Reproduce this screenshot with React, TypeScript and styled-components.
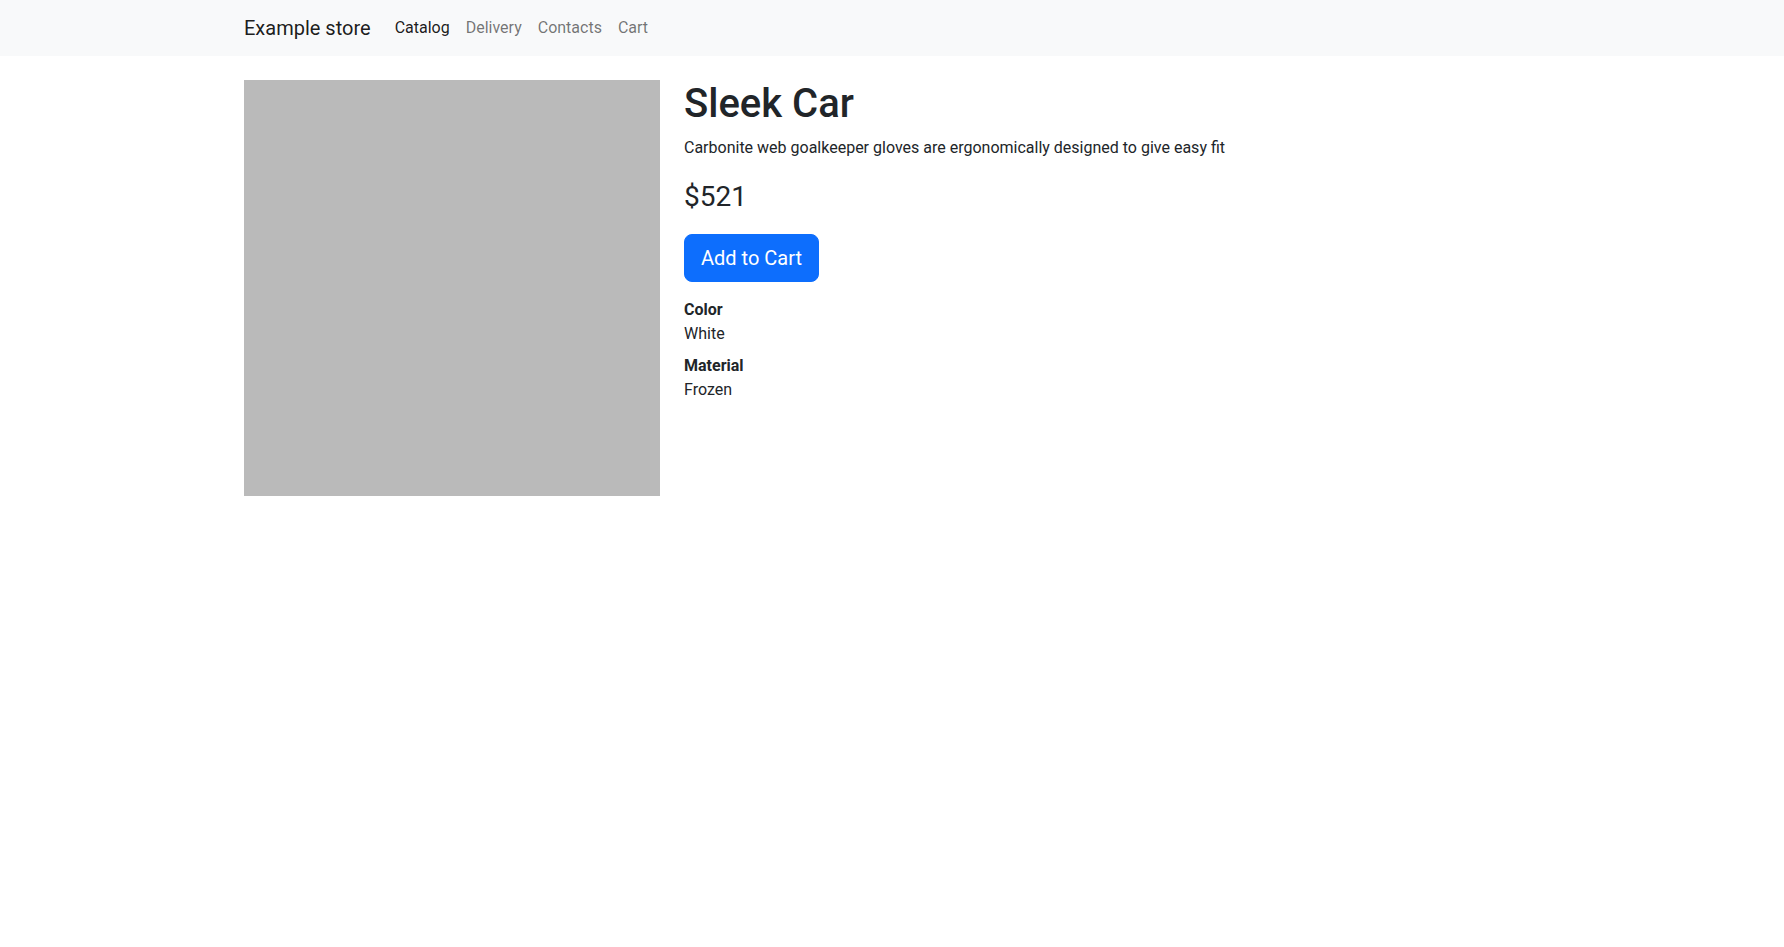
import React from "react";
import styled, { createGlobalStyle } from "styled-components";

const Global = createGlobalStyle`
  *, *::before, *::after { box-sizing: border-box; }
  body {
    margin: 0;
    font-family: Roboto, "Liberation Sans", sans-serif;
    font-size: 16px;
    line-height: 1.5;
    color: #212529;
    background: #fff;
  }
`;

const Navbar = styled.nav`
  background: #f8f9fa;
  padding: 8px 0;
`;

const Container = styled.div`
  max-width: 1320px;
  margin: 0 auto;
  padding: 0 12px;
`;

const NavInner = styled(Container)`
  display: flex;
  align-items: center;
`;

const Brand = styled.a`
  font-size: 20px;
  line-height: 30px;
  padding: 5px 0;
  margin-right: 16px;
  color: rgba(0, 0, 0, 0.9);
  text-decoration: none;
`;

const NavList = styled.div`
  display: flex;
`;

const NavLink = styled.a<{ $active?: boolean }>`
  padding: 8px;
  line-height: 24px;
  color: ${(p) => (p.$active ? "rgba(0,0,0,0.9)" : "rgba(0,0,0,0.55)")};
  text-decoration: none;
`;

const Row = styled.div`
  display: grid;
  grid-template-columns: 416px 1fr;
  column-gap: 24px;
  margin-top: 24px;
`;

const Picture = styled.div`
  width: 416px;
  height: 416px;
  background: #bababa;
`;

const Info = styled.div``;

const Title = styled.h1`
  font-size: 40px;
  font-weight: 500;
  line-height: 1.2;
  margin: 0 0 8px;
`;

const Text = styled.p`
  margin: 0 0 16px;
`;

const Price = styled.p`
  font-size: 28px;
  margin: 0 0 16px;
`;

const Button = styled.button`
  font-family: inherit;
  font-size: 20px;
  line-height: 30px;
  padding: 8px 16px;
  border: 1px solid #0d6efd;
  border-radius: 8px;
  background: #0d6efd;
  color: #fff;
  margin-bottom: 16px;
  cursor: pointer;
`;

const Props = styled.dl`
  margin: 0;
`;

const Term = styled.dt`
  font-weight: 700;
`;

const Desc = styled.dd`
  margin: 0 0 8px;
`;

export default function App() {
  return (
    <>
      <Global />
      <Navbar>
        <NavInner>
          <Brand href="#">Example store</Brand>
          <NavList>
            <NavLink $active href="#">Catalog</NavLink>
            <NavLink href="#">Delivery</NavLink>
            <NavLink href="#">Contacts</NavLink>
            <NavLink href="#">Cart</NavLink>
          </NavList>
        </NavInner>
      </Navbar>
      <Container>
        <Row>
          <Picture />
          <Info>
            <Title>Sleek Car</Title>
            <Text>Carbonite web goalkeeper gloves are ergonomically designed to give easy fit</Text>
            <Price>$521</Price>
            <Button>Add to Cart</Button>
            <Props>
              <Term>Color</Term>
              <Desc>White</Desc>
              <Term>Material</Term>
              <Desc>Frozen</Desc>
            </Props>
          </Info>
        </Row>
      </Container>
    </>
  );
}
